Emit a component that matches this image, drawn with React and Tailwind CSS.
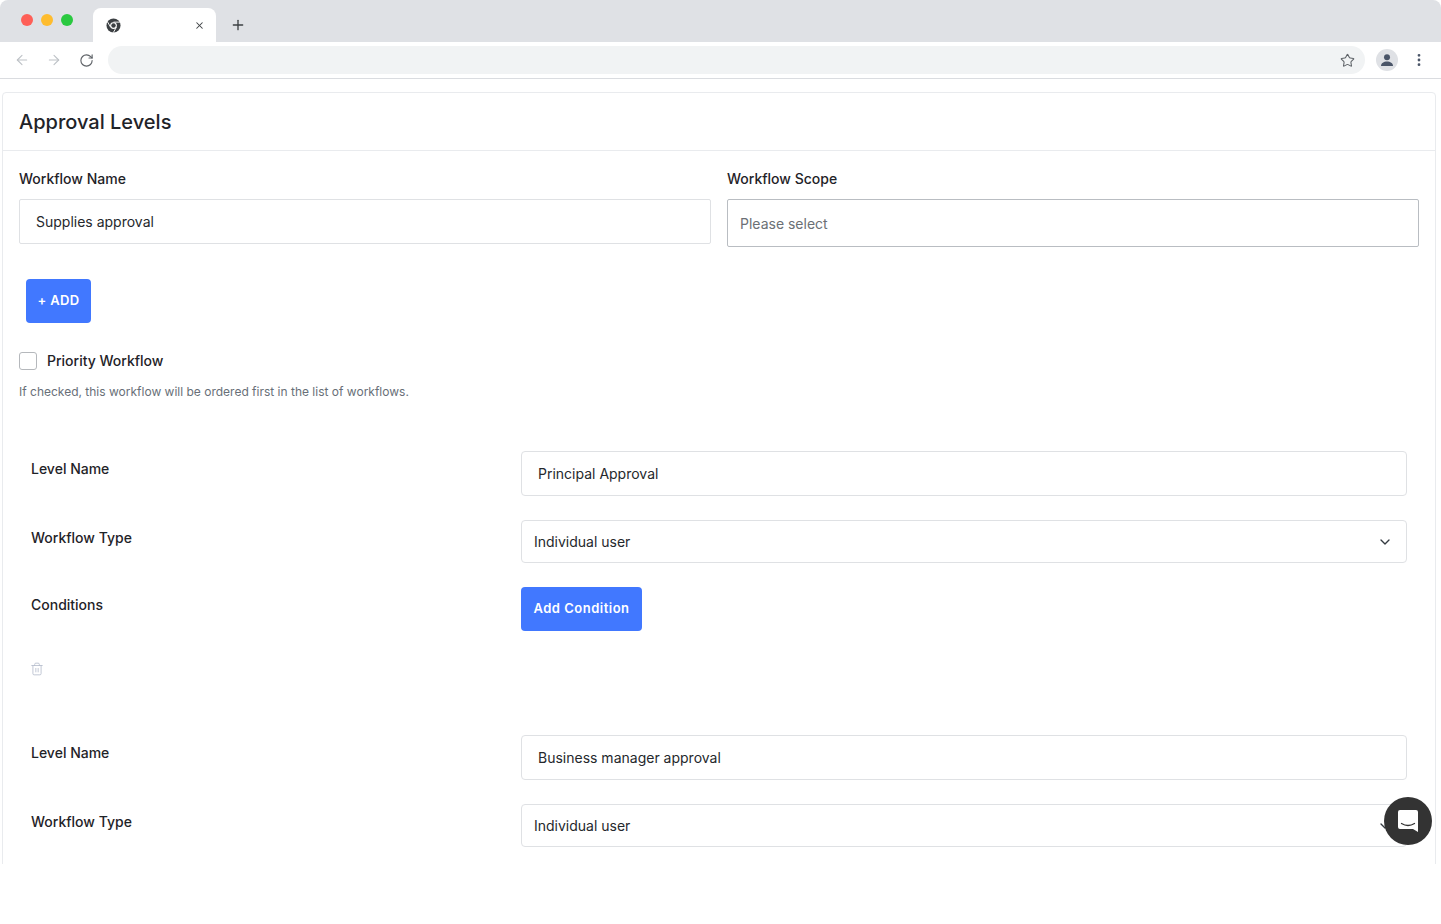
import { ArrowLeft, ArrowRight, RotateCw, Star, X, Plus, ChevronDown, Trash2, EllipsisVertical } from 'lucide-react';

function ChromeLogo() {
  return (
    <svg width="15" height="15" viewBox="0 0 16 16">
      <circle cx="8" cy="8" r="7.5" fill="#3c4043" />
      <circle cx="8" cy="8" r="3.6" fill="#fff" />
      <circle cx="8" cy="8" r="2.4" fill="#3c4043" />
      <path d="M8 4.4h6.8M4.9 9.8 1.5 3.9M11.1 9.8l-3.4 5.9" stroke="#fff" strokeWidth="1" />
    </svg>
  );
}

function BrowserBar() {
  return (
    <div className="shrink-0">
      <div className="h-[42px] bg-[#dfe1e5] flex rounded-t-[8px]">
        <div className="flex items-center gap-[8px] pl-[21px] w-[93px] pb-[2px]">
          <span className="w-[12px] h-[12px] rounded-full bg-[#fe5f57]"></span>
          <span className="w-[12px] h-[12px] rounded-full bg-[#febc2e]"></span>
          <span className="w-[12px] h-[12px] rounded-full bg-[#2ac940]"></span>
        </div>
        <div className="mt-[8px] w-[123px] h-[34px] bg-white rounded-t-[8px] flex items-center justify-between pl-[13px] pr-[11px]">
          <ChromeLogo />
          <X size={11} strokeWidth={2.2} className="text-[#3c4043]" />
        </div>
        <div className="flex items-center pl-[14px] pt-[8px]">
          <Plus size={16} strokeWidth={2} className="text-[#3c4043]" />
        </div>
      </div>
      <div className="h-[37px] bg-white border-b border-[#dadce0] flex items-center pl-[14px] pr-[14px]">
        <ArrowLeft size={16} strokeWidth={1.6} className="text-[#bdc1c6]" />
        <ArrowRight size={16} strokeWidth={1.6} className="text-[#bdc1c6] ml-[16px]" />
        <RotateCw size={15} strokeWidth={1.8} className="text-[#5f6368] ml-[17px]" />
        <div className="ml-[14px] w-[1257px] h-[28px] rounded-full bg-[#f1f3f4] flex items-center justify-end pr-[10px]">
          <Star size={15} strokeWidth={1.7} className="text-[#5f6368]" />
        </div>
        <div className="ml-[11px] w-[22px] h-[22px] rounded-full bg-[#dfe1e5] flex items-center justify-center overflow-hidden">
          <svg width="14" height="14" viewBox="0 0 14 14" fill="#4a5568">
            <circle cx="7" cy="4.2" r="3" />
            <path d="M1 13c0-3 2.8-4.6 6-4.6s6 1.600 6 4.600z" />
          </svg>
        </div>
        <EllipsisVertical size={16} strokeWidth={2.2} className="text-[#4a5568] ml-[13px]" />
      </div>
    </div>
  );
}

function TextRow({ label, value }) {
  return (
    <div className="flex">
      <label className="w-[490px] pt-[9px] text-[14px] leading-[18px] font-medium text-[#1f2328]">{label}</label>
      <div className="w-[886px] h-[45px] border border-[#dfe1e4] rounded-[4px] flex items-center pl-[16px] text-[14px] text-[#25282c]">
        {value}
      </div>
    </div>
  );
}

function SelectRow({ label, value }) {
  return (
    <div className="flex">
      <label className="w-[490px] pt-[9px] text-[14px] leading-[18px] font-medium text-[#1f2328]">{label}</label>
      <div className="w-[886px] h-[43px] border border-[#dfe1e4] rounded-[4px] flex items-center justify-between pl-[12px] pr-[13px] text-[14px] text-[#25282c]">
        {value}
        <ChevronDown size={16} strokeWidth={2} className="text-[#343a40]" />
      </div>
    </div>
  );
}

export default function App() {
  return (
    <div className="relative w-[1441px] h-[924px] overflow-hidden bg-white flex flex-col font-['Inter',sans-serif]">
      <BrowserBar />
      <div className="h-[785px] overflow-hidden pt-[13px] pl-[2px]">
        <div className="w-[1434px] h-[800px] border border-[#e9ebee] rounded-[4px]">
          <div className="h-[58px] border-b border-[#e9ebee] flex items-center pl-[16px]">
            <h1 className="text-[20px] font-medium text-[#1f2328]">Approval Levels</h1>
          </div>
          <div className="px-[16px] pt-[19px]">
            <div className="grid grid-cols-[692px_692px] gap-x-[16px]">
              <div>
                <label className="block text-[14px] leading-[18px] font-medium text-[#1f2328]">Workflow Name</label>
                <div className="mt-[11px] h-[45px] border border-[#dfe1e4] rounded-[2px] flex items-center pl-[16px] text-[14px] text-[#25282c]">
                  Supplies approval
                </div>
              </div>
              <div>
                <label className="block text-[14px] leading-[18px] font-medium text-[#1f2328]">Workflow Scope</label>
                <div className="mt-[11px] h-[48px] border border-[#b9bdc2] rounded-[2px] flex items-center pl-[12px] text-[14px] text-[#6b7075]">
                  Please select
                </div>
              </div>
            </div>
            <button className="mt-[32px] ml-[7px] block w-[65px] h-[44px] rounded-[4px] bg-[#4178ff] text-white text-[13px] font-semibold tracking-[0.3px]">
              + ADD
            </button>
            <div className="mt-[27px] flex items-center gap-[10px]">
              <span className="w-[18px] h-[18px] border border-[#b5b8bc] rounded-[3px] bg-white"></span>
              <span className="text-[14px] font-medium text-[#1f2328]">Priority Workflow</span>
            </div>
            <p className="mt-[13px] text-[12px] leading-[16px] text-[#686f78]">
              If checked, this workflow will be ordered first in the list of workflows.
            </p>
            <div className="mt-[51px] pl-[12px]">
              <TextRow label="Level Name" value="Principal Approval" />
              <div className="mt-[24px]">
                <SelectRow label="Workflow Type" value="Individual user" />
              </div>
              <div className="mt-[24px] flex">
                <label className="w-[490px] pt-[9px] text-[14px] leading-[18px] font-medium text-[#1f2328]">Conditions</label>
                <button className="w-[121px] h-[44px] rounded-[4px] bg-[#4178ff] text-white text-[13px] font-semibold tracking-[0.5px]">
                  Add Condition
                </button>
              </div>
              <Trash2 size={14} strokeWidth={1.4} className="mt-[31px] text-[#b4bccb] -ml-[1px]" />
              <div className="mt-[59px]">
                <TextRow label="Level Name" value="Business manager approval" />
              </div>
              <div className="mt-[24px]">
                <SelectRow label="Workflow Type" value="Individual user" />
              </div>
            </div>
          </div>
        </div>
      </div>
      <button className="absolute left-[1384px] top-[797px] w-[48px] h-[48px] rounded-full bg-[#333333] flex items-center justify-center">
        <svg width="22" height="24" viewBox="0 0 22 24">
          <path d="M3 1h16a2 2 0 0 1 2 2v20l-5-3H3a2 2 0 0 1-2-2V3a2 2 0 0 1 2-2z" fill="#fff" />
          <path d="M4.500 14.500c4 2.500 9 2.500 13 0" fill="none" stroke="#333" strokeWidth="1.300" strokeLinecap="round" />
        </svg>
      </button>
    </div>
  );
}
